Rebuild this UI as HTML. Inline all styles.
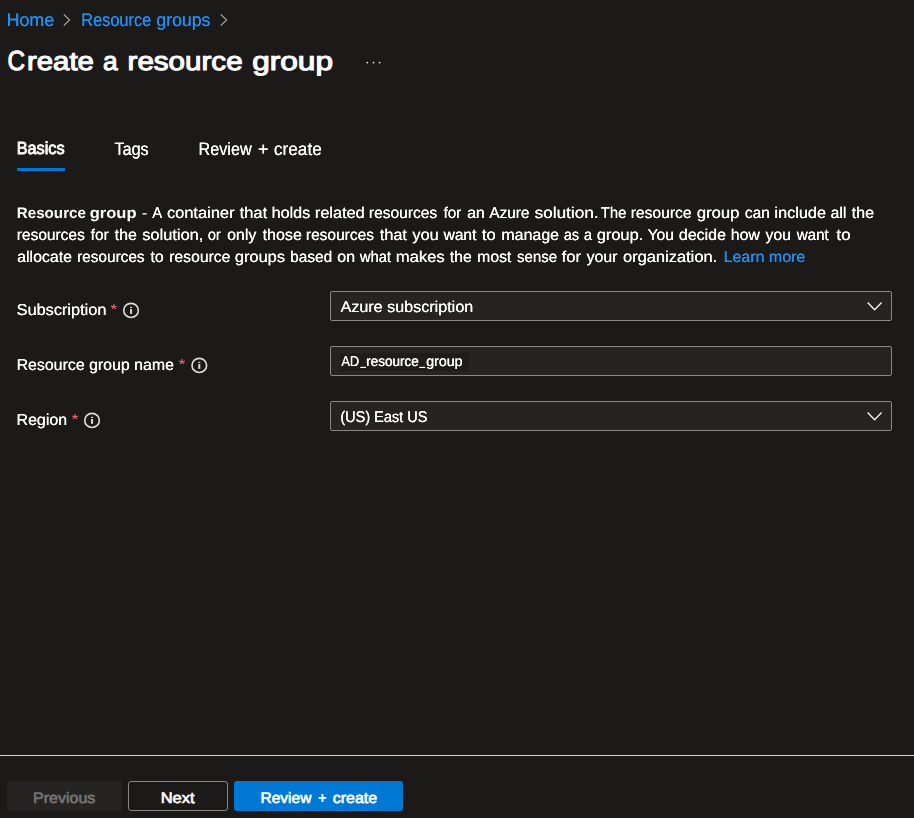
<!DOCTYPE html>
<html lang="en">
<head>
<meta charset="utf-8">
<title>Create a resource group</title>
<style>
html,body,h1,p{margin:0;padding:0;}
body{width:914px;height:818px;background:#1b1a19;color:#fff;font-family:"Liberation Sans",sans-serif;position:relative;overflow:hidden;text-rendering:geometricPrecision;}
.t{position:absolute;left:0;top:0;white-space:pre;line-height:1;transform-origin:0 0;text-decoration:none;display:block;margin:0;font-weight:normal;}
.box{position:absolute;left:330px;width:562px;height:30px;box-sizing:border-box;border:1px solid #8a8886;border-radius:2px;background:#252423;}

.btn{position:absolute;top:781px;height:30px;border-radius:3px;box-sizing:border-box;}
svg{position:absolute;overflow:visible;}
#g{position:absolute;left:0;top:0;width:914px;height:818px;will-change:transform;}

#bc1{font-size:18.3px;color:#238ff5;transform:translate(6.49px,10.85px) scaleX(0.9789);text-shadow:0.15px 0 0 #238ff5;}
#bc2a{font-size:18.3px;color:#238ff5;transform:translate(81.22px,10.85px) scaleX(0.8935);text-shadow:0.15px 0 0 #238ff5;}
#bc2b{font-size:18.3px;color:#238ff5;transform:translate(156.37px,10.85px) scaleX(0.9645);text-shadow:0.15px 0 0 #238ff5;}
#hC{font-size:27.5px;color:#ffffff;transform:translate(7.46px,47.18px) scaleX(0.8814);-webkit-text-stroke:1.05px #ffffff;}
#h0{font-size:26px;color:#ffffff;transform:translate(26.97px,48.31px) scaleX(1.1288);-webkit-text-stroke:1.05px #ffffff;}
#h1{font-size:26px;color:#ffffff;transform:translate(103.00px,48.31px) scaleX(1.0122);-webkit-text-stroke:1.05px #ffffff;}
#h2{font-size:26px;color:#ffffff;transform:translate(127.53px,48.31px) scaleX(1.1376);-webkit-text-stroke:1.05px #ffffff;}
#h3{font-size:26px;color:#ffffff;transform:translate(252.13px,48.31px) scaleX(1.2166);-webkit-text-stroke:1.05px #ffffff;}
#tab1{font-size:17.5px;color:#ffffff;transform:translate(16.72px,140.19px) scaleX(0.9293);-webkit-text-stroke:0.85px #ffffff;}
#tab2{font-size:17.9px;color:#ffffff;transform:translate(114.52px,140.84px) scaleX(0.9019);text-shadow:0.08px 0 0 #ffffff;}
#tab3a{font-size:17.9px;color:#ffffff;transform:translate(198.46px,140.84px) scaleX(0.9058);text-shadow:0.08px 0 0 #ffffff;}
#tab3b{font-size:17.9px;color:#ffffff;transform:translate(257.84px,140.84px) scaleX(1.0345);text-shadow:0.08px 0 0 #ffffff;}
#tab3c{font-size:17.9px;color:#ffffff;transform:translate(273.84px,140.84px) scaleX(0.9637);text-shadow:0.08px 0 0 #ffffff;}
#pb0{font-size:15.3px;color:#ffffff;transform:translate(16.83px,205.83px) scaleX(0.9903);font-weight:700;}
#pb1{font-size:15.3px;color:#ffffff;transform:translate(89.72px,205.83px) scaleX(1.0790);font-weight:700;}
#pdash{font-size:15.7px;color:#ffffff;transform:translate(141.65px,205.50px) scaleX(1.0905);}
#pa0{font-size:15.7px;color:#ffffff;transform:translate(152.17px,206.16px) scaleX(0.9500);text-shadow:0.18px 0 0 #ffffff;}
#pa1{font-size:15.7px;color:#ffffff;transform:translate(166.89px,206.16px) scaleX(1.0463);text-shadow:0.18px 0 0 #ffffff;}
#pa2{font-size:15.7px;color:#ffffff;transform:translate(239.58px,206.16px) scaleX(1.0508);text-shadow:0.18px 0 0 #ffffff;}
#pa3{font-size:15.7px;color:#ffffff;transform:translate(271.45px,206.16px) scaleX(1.0331);text-shadow:0.18px 0 0 #ffffff;}
#pa4{font-size:15.7px;color:#ffffff;transform:translate(314.86px,206.16px) scaleX(1.0361);text-shadow:0.18px 0 0 #ffffff;}
#pa5{font-size:15.7px;color:#ffffff;transform:translate(368.83px,206.16px) scaleX(0.9913);text-shadow:0.18px 0 0 #ffffff;}
#pa6{font-size:15.7px;color:#ffffff;transform:translate(443.47px,206.16px) scaleX(0.9654);text-shadow:0.18px 0 0 #ffffff;}
#pa7{font-size:15.7px;color:#ffffff;transform:translate(466.95px,206.16px) scaleX(1.0202);text-shadow:0.18px 0 0 #ffffff;}
#pa8{font-size:15.7px;color:#ffffff;transform:translate(489.22px,206.16px) scaleX(0.9794);text-shadow:0.18px 0 0 #ffffff;}
#pa9{font-size:15.7px;color:#ffffff;transform:translate(534.53px,206.16px) scaleX(1.0950);text-shadow:0.18px 0 0 #ffffff;}
#pa10{font-size:15.7px;color:#ffffff;transform:translate(600.66px,206.16px) scaleX(0.9454);text-shadow:0.18px 0 0 #ffffff;}
#pa11{font-size:15.7px;color:#ffffff;transform:translate(630.65px,206.16px) scaleX(0.9960);text-shadow:0.18px 0 0 #ffffff;}
#pa12{font-size:15.7px;color:#ffffff;transform:translate(696.74px,206.16px) scaleX(1.0595);text-shadow:0.18px 0 0 #ffffff;}
#pa13{font-size:15.7px;color:#ffffff;transform:translate(744.85px,206.16px) scaleX(0.9823);text-shadow:0.18px 0 0 #ffffff;}
#pa14{font-size:15.7px;color:#ffffff;transform:translate(774.32px,206.16px) scaleX(1.0384);text-shadow:0.18px 0 0 #ffffff;}
#pa15{font-size:15.7px;color:#ffffff;transform:translate(830.58px,206.16px) scaleX(0.9975);text-shadow:0.18px 0 0 #ffffff;}
#pa16{font-size:15.7px;color:#ffffff;transform:translate(851.46px,206.16px) scaleX(1.0327);text-shadow:0.18px 0 0 #ffffff;}
#pc0{font-size:15.7px;color:#ffffff;transform:translate(16.68px,228.11px) scaleX(0.9877);text-shadow:0.18px 0 0 #ffffff;}
#pc1{font-size:15.7px;color:#ffffff;transform:translate(90.61px,228.11px) scaleX(0.9827);text-shadow:0.18px 0 0 #ffffff;}
#pc2{font-size:15.7px;color:#ffffff;transform:translate(114.53px,228.11px) scaleX(1.0222);text-shadow:0.18px 0 0 #ffffff;}
#pc3{font-size:15.7px;color:#ffffff;transform:translate(142.17px,228.11px) scaleX(1.0451);text-shadow:0.18px 0 0 #ffffff;}
#pc4{font-size:15.7px;color:#ffffff;transform:translate(207.79px,228.11px) scaleX(0.9211);text-shadow:0.18px 0 0 #ffffff;}
#pc5{font-size:15.7px;color:#ffffff;transform:translate(226.95px,228.11px) scaleX(1.0180);text-shadow:0.18px 0 0 #ffffff;}
#pc6{font-size:15.7px;color:#ffffff;transform:translate(262.45px,228.11px) scaleX(1.0268);text-shadow:0.18px 0 0 #ffffff;}
#pc7{font-size:15.7px;color:#ffffff;transform:translate(305.83px,228.11px) scaleX(0.9884);text-shadow:0.18px 0 0 #ffffff;}
#pc8{font-size:15.7px;color:#ffffff;transform:translate(379.67px,228.11px) scaleX(1.0405);text-shadow:0.18px 0 0 #ffffff;}
#pc9{font-size:15.7px;color:#ffffff;transform:translate(412.37px,228.11px) scaleX(1.0365);text-shadow:0.18px 0 0 #ffffff;}
#pc10{font-size:15.7px;color:#ffffff;transform:translate(443.51px,228.11px) scaleX(0.9895);text-shadow:0.18px 0 0 #ffffff;}
#pc11{font-size:15.7px;color:#ffffff;transform:translate(481.77px,228.11px) scaleX(1.0633);text-shadow:0.18px 0 0 #ffffff;}
#pc12{font-size:15.7px;color:#ffffff;transform:translate(501.32px,228.11px) scaleX(1.0164);text-shadow:0.18px 0 0 #ffffff;}
#pc13{font-size:15.7px;color:#ffffff;transform:translate(563.86px,228.11px) scaleX(0.9120);text-shadow:0.18px 0 0 #ffffff;}
#pc14{font-size:15.7px;color:#ffffff;transform:translate(583.80px,228.11px) scaleX(0.9340);text-shadow:0.18px 0 0 #ffffff;}
#pc15{font-size:15.7px;color:#ffffff;transform:translate(596.70px,228.11px) scaleX(1.0441);text-shadow:0.18px 0 0 #ffffff;}
#pc16{font-size:15.7px;color:#ffffff;transform:translate(647.46px,228.11px) scaleX(0.9959);text-shadow:0.18px 0 0 #ffffff;}
#pc17{font-size:15.7px;color:#ffffff;transform:translate(678.85px,228.11px) scaleX(1.0159);text-shadow:0.18px 0 0 #ffffff;}
#pc18{font-size:15.7px;color:#ffffff;transform:translate(730.69px,228.11px) scaleX(1.0110);text-shadow:0.18px 0 0 #ffffff;}
#pc19{font-size:15.7px;color:#ffffff;transform:translate(765.41px,228.11px) scaleX(1.0081);text-shadow:0.18px 0 0 #ffffff;}
#pc20{font-size:15.7px;color:#ffffff;transform:translate(796.64px,228.11px) scaleX(0.9644);text-shadow:0.18px 0 0 #ffffff;}
#pc21{font-size:15.7px;color:#ffffff;transform:translate(836.30px,228.11px) scaleX(1.0942);text-shadow:0.18px 0 0 #ffffff;}
#pd0{font-size:15.7px;color:#ffffff;transform:translate(17.01px,250.18px) scaleX(1.0168);text-shadow:0.18px 0 0 #ffffff;}
#pd1{font-size:15.7px;color:#ffffff;transform:translate(76.95px,250.18px) scaleX(0.9814);text-shadow:0.18px 0 0 #ffffff;}
#pd2{font-size:15.7px;color:#ffffff;transform:translate(150.44px,250.18px) scaleX(1.0054);text-shadow:0.18px 0 0 #ffffff;}
#pd3{font-size:15.7px;color:#ffffff;transform:translate(169.13px,250.18px) scaleX(1.0020);text-shadow:0.18px 0 0 #ffffff;}
#pd4{font-size:15.7px;color:#ffffff;transform:translate(234.77px,250.18px) scaleX(1.0448);text-shadow:0.18px 0 0 #ffffff;}
#pd5{font-size:15.7px;color:#ffffff;transform:translate(290.05px,250.18px) scaleX(0.9831);text-shadow:0.18px 0 0 #ffffff;}
#pd6{font-size:15.7px;color:#ffffff;transform:translate(337.04px,250.18px) scaleX(1.0357);text-shadow:0.18px 0 0 #ffffff;}
#pd7{font-size:15.7px;color:#ffffff;transform:translate(359.85px,250.18px) scaleX(0.9371);text-shadow:0.18px 0 0 #ffffff;}
#pd8{font-size:15.7px;color:#ffffff;transform:translate(395.63px,250.18px) scaleX(1.0611);text-shadow:0.18px 0 0 #ffffff;}
#pd9{font-size:15.7px;color:#ffffff;transform:translate(449.66px,250.18px) scaleX(1.0108);text-shadow:0.18px 0 0 #ffffff;}
#pd10{font-size:15.7px;color:#ffffff;transform:translate(477.10px,250.18px) scaleX(1.0027);text-shadow:0.18px 0 0 #ffffff;}
#pd11{font-size:15.7px;color:#ffffff;transform:translate(516.90px,250.18px) scaleX(0.9585);text-shadow:0.18px 0 0 #ffffff;}
#pd12{font-size:15.7px;color:#ffffff;transform:translate(561.54px,250.18px) scaleX(1.0586);text-shadow:0.18px 0 0 #ffffff;}
#pd13{font-size:15.7px;color:#ffffff;transform:translate(586.47px,250.18px) scaleX(1.0109);text-shadow:0.18px 0 0 #ffffff;}
#pd14{font-size:15.7px;color:#ffffff;transform:translate(622.91px,250.18px) scaleX(1.0486);text-shadow:0.18px 0 0 #ffffff;}
#lm{font-size:15.7px;color:#238ff5;transform:translate(723.55px,250.18px) scaleX(1.0181);text-shadow:0.18px 0 0 #238ff5;}
#l1{font-size:15.8px;color:#ffffff;transform:translate(16.57px,303.19px) scaleX(1.0318);text-shadow:0.18px 0 0 #ffffff;}
#l2{font-size:15.8px;color:#ffffff;transform:translate(16.45px,358.20px) scaleX(1.0073);text-shadow:0.18px 0 0 #ffffff;}
#l3{font-size:15.8px;color:#ffffff;transform:translate(16.42px,413.19px) scaleX(1.0111);text-shadow:0.18px 0 0 #ffffff;}
#b1t{font-size:15.6px;color:#ffffff;transform:translate(340.44px,299.52px) scaleX(1.0345);text-shadow:0.18px 0 0 #ffffff;}
#b2a{font-size:14.3px;color:#ffffff;transform:translate(341.19px,354.84px) scaleX(0.8981);text-shadow:0.35px 0 0 #ffffff;}
#b2b{font-size:14.3px;color:#ffffff;transform:translate(360.55px,353.58px) scaleX(0.6454);text-shadow:0.35px 0 0 #ffffff;}
#b2c{font-size:14.3px;color:#ffffff;transform:translate(366.10px,354.84px) scaleX(0.9436);text-shadow:0.35px 0 0 #ffffff;}
#b2d{font-size:14.3px;color:#ffffff;transform:translate(419.53px,353.58px) scaleX(0.6682);text-shadow:0.35px 0 0 #ffffff;}
#b2e{font-size:14.3px;color:#ffffff;transform:translate(426.04px,354.84px) scaleX(0.9952);text-shadow:0.35px 0 0 #ffffff;}
#b3t{font-size:15.6px;color:#ffffff;transform:translate(340.22px,409.73px) scaleX(0.9311);text-shadow:0.18px 0 0 #ffffff;}
#bt1{font-size:15.2px;color:#777573;transform:translate(33.03px,790.86px) scaleX(1.0546);-webkit-text-stroke:0.65px #777573;}
#bt2{font-size:15.2px;color:#ffffff;transform:translate(160.68px,790.86px) scaleX(1.0877);-webkit-text-stroke:0.65px #ffffff;}
#bt3a{font-size:15.2px;color:#ffffff;transform:translate(260.47px,790.86px) scaleX(1.0219);-webkit-text-stroke:0.65px #ffffff;}
#bt3b{font-size:15.2px;color:#ffffff;transform:translate(318.14px,790.86px) scaleX(0.9169);-webkit-text-stroke:0.65px #ffffff;}
#bt3c{font-size:15.2px;color:#ffffff;transform:translate(332.70px,790.86px) scaleX(1.0513);-webkit-text-stroke:0.65px #ffffff;}
</style>
</head>
<body>
<h1><span class="t" id="hC">C</span><span class="t" id="h0">reate</span>
<span class="t" id="h1">a</span>
<span class="t" id="h2">resource</span>
<span class="t" id="h3">group</span></h1>
<div class="btn" style="left:7px;width:115px;background:#252423"></div>
<div class="btn" style="left:128px;width:100px;border:1px solid #8a8886"></div>
<div class="btn" style="left:234px;width:169px;background:#0078d4"></div>
<div class="t" id="bt1">Previous</div>
<div class="t" id="bt2">Next</div>
<div><span class="t" id="bt3a">Review</span>
<span class="t" id="bt3b">+</span>
<span class="t" id="bt3c">create</span></div>
<div id="g">
<nav>
<a class="t" id="bc1">Home</a>
<svg style="left:63.0px;top:14px" width="8" height="12" viewBox="0 0 8 12"><path d="M0.8 0.5 L6.6 6 L0.8 11.5" fill="none" stroke="#a19f9d" stroke-width="1.2"/></svg>
<a><span class="t" id="bc2a">Resource</span>
<span class="t" id="bc2b">groups</span></a>
<svg style="left:220.0px;top:14px" width="8" height="12" viewBox="0 0 8 12"><path d="M0.8 0.5 L6.6 6 L0.8 11.5" fill="none" stroke="#a19f9d" stroke-width="1.2"/></svg>
</nav>
<svg style="left:366px;top:60px" width="16" height="5" viewBox="0 0 16 5"><circle cx="1.3" cy="2.6" r="0.95" fill="#e1dfdd"/><circle cx="7.5" cy="2.6" r="0.95" fill="#e1dfdd"/><circle cx="13.7" cy="2.6" r="0.95" fill="#e1dfdd"/></svg>

<div class="t" id="tab1">Basics</div>
<div style="position:absolute;left:17px;top:168px;width:48px;height:3px;background:#0078d4"></div>
<div class="t" id="tab2">Tags</div>
<div><span class="t" id="tab3a">Review</span>
<span class="t" id="tab3b">+</span>
<span class="t" id="tab3c">create</span></div>

<p>
<b class="t" id="pb0">Resource</b>
<b class="t" id="pb1">group</b>
<span class="t" id="pdash">-</span>
<span class="t" id="pa0">A</span>
<span class="t" id="pa1">container</span>
<span class="t" id="pa2">that</span>
<span class="t" id="pa3">holds</span>
<span class="t" id="pa4">related</span>
<span class="t" id="pa5">resources</span>
<span class="t" id="pa6">for</span>
<span class="t" id="pa7">an</span>
<span class="t" id="pa8">Azure</span>
<span class="t" id="pa9">solution.</span>
<span class="t" id="pa10">The</span>
<span class="t" id="pa11">resource</span>
<span class="t" id="pa12">group</span>
<span class="t" id="pa13">can</span>
<span class="t" id="pa14">include</span>
<span class="t" id="pa15">all</span>
<span class="t" id="pa16">the</span>
<span class="t" id="pc0">resources</span>
<span class="t" id="pc1">for</span>
<span class="t" id="pc2">the</span>
<span class="t" id="pc3">solution,</span>
<span class="t" id="pc4">or</span>
<span class="t" id="pc5">only</span>
<span class="t" id="pc6">those</span>
<span class="t" id="pc7">resources</span>
<span class="t" id="pc8">that</span>
<span class="t" id="pc9">you</span>
<span class="t" id="pc10">want</span>
<span class="t" id="pc11">to</span>
<span class="t" id="pc12">manage</span>
<span class="t" id="pc13">as</span>
<span class="t" id="pc14">a</span>
<span class="t" id="pc15">group.</span>
<span class="t" id="pc16">You</span>
<span class="t" id="pc17">decide</span>
<span class="t" id="pc18">how</span>
<span class="t" id="pc19">you</span>
<span class="t" id="pc20">want</span>
<span class="t" id="pc21">to</span>
<span class="t" id="pd0">allocate</span>
<span class="t" id="pd1">resources</span>
<span class="t" id="pd2">to</span>
<span class="t" id="pd3">resource</span>
<span class="t" id="pd4">groups</span>
<span class="t" id="pd5">based</span>
<span class="t" id="pd6">on</span>
<span class="t" id="pd7">what</span>
<span class="t" id="pd8">makes</span>
<span class="t" id="pd9">the</span>
<span class="t" id="pd10">most</span>
<span class="t" id="pd11">sense</span>
<span class="t" id="pd12">for</span>
<span class="t" id="pd13">your</span>
<span class="t" id="pd14">organization.</span>
<a class="t" id="lm">Learn more</a>
</p>

<label class="t" id="l1">Subscription</label><span class="t" style="font-size:14.1px;color:#f1707b;transform:translate(110.30px,301.60px) scaleX(1.3)">*</span><svg style="left:122px;top:301px" width="19" height="19" viewBox="0 0 19 19"><g transform="translate(0.05 0.45)"><ellipse cx="9" cy="9" rx="7.3" ry="7.05" fill="none" stroke="#dddbd9" stroke-width="1.65"/><rect x="8" y="7.6" width="2" height="4.8" fill="#dddbd9"/><rect x="8" y="5.4" width="2" height="1.2" fill="#dddbd9"/></g></svg>
<label class="t" id="l2">Resource group name</label><span class="t" style="font-size:14.1px;color:#f1707b;transform:translate(178.50px,356.60px) scaleX(1.3)">*</span><svg style="left:190px;top:356px" width="19" height="19" viewBox="0 0 19 19"><g transform="translate(0.30 0.45)"><ellipse cx="9" cy="9" rx="7.3" ry="7.05" fill="none" stroke="#dddbd9" stroke-width="1.65"/><rect x="8" y="7.6" width="2" height="4.8" fill="#dddbd9"/><rect x="8" y="5.4" width="2" height="1.2" fill="#dddbd9"/></g></svg>
<label class="t" id="l3">Region</label><span class="t" style="font-size:14.1px;color:#f1707b;transform:translate(71.50px,411.60px) scaleX(1.3)">*</span><svg style="left:83px;top:411px" width="19" height="19" viewBox="0 0 19 19"><g transform="translate(0.05 0.45)"><ellipse cx="9" cy="9" rx="7.3" ry="7.05" fill="none" stroke="#dddbd9" stroke-width="1.65"/><rect x="8" y="7.6" width="2" height="4.8" fill="#dddbd9"/><rect x="8" y="5.4" width="2" height="1.2" fill="#dddbd9"/></g></svg>

<div class="box" style="top:291px"><svg style="left:536px;top:10px" width="16" height="10" viewBox="0 0 16 10"><path d="M0.6 0.6 L7.6 7.8 L14.6 0.6" fill="none" stroke="#f3f2f1" stroke-width="1.4"/></svg></div>
<div class="box" style="top:346px"></div>
<div class="box" style="top:401px"><svg style="left:536px;top:10px" width="16" height="10" viewBox="0 0 16 10"><path d="M0.6 0.6 L7.6 7.8 L14.6 0.6" fill="none" stroke="#f3f2f1" stroke-width="1.4"/></svg></div>
<div style="position:absolute;left:340px;top:353px;width:129px;height:18px;background:#1e1d1c"></div>
<div class="t" id="b1t">Azure subscription</div>
<div id="b2"><span class="t" id="b2a">AD</span><span class="t" id="b2b">_</span><span class="t" id="b2c">resource</span><span class="t" id="b2d">_</span><span class="t" id="b2e">group</span></div>
<div class="t" id="b3t">(US) East US</div>

<div style="position:absolute;left:0;top:755px;width:914px;height:1px;background:#d2d0ce"></div>
</div>


</body>
</html>
